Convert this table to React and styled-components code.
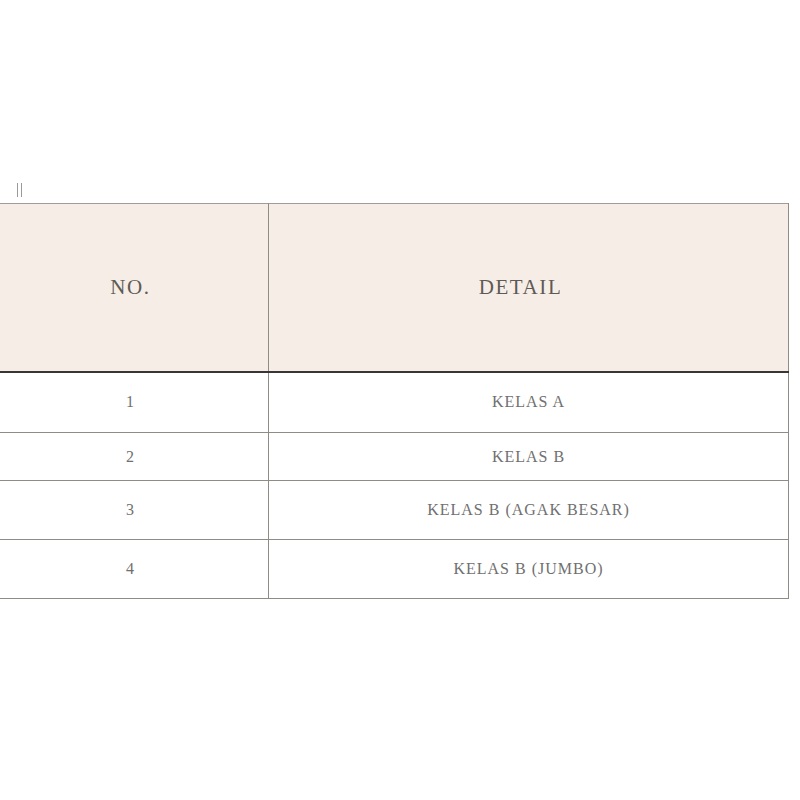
import React from "react";
import styled, { createGlobalStyle } from "styled-components";

const Global = createGlobalStyle`
  html, body { margin: 0; padding: 0; background: #fff; }
  body { font-family: "Liberation Serif", serif; }
`;

const Page = styled.div`
  width: 800px;
  height: 800px;
  overflow: hidden;
  padding-top: 181px;
  box-sizing: border-box;
`;

const Marker = styled.div`
  margin-left: 17px;
  height: 16px;
  display: flex;
  gap: 3px;
  margin-bottom: 6px;
  span {
    width: 1px;
    height: 14px;
    background: #9a9a9a;
    margin-top: 2px;
  }
`;

const Table = styled.table`
  margin-left: -8px;
  width: 796px;
  border-collapse: collapse;
  table-layout: fixed;
`;

const HeadCell = styled.th`
  box-sizing: border-box;
  height: 168px;
  background: #f6eee6;
  border-top: 1px solid #a09c98;
  border-bottom: 2px solid #3a3535;
  border-left: 1px solid #8f8b87;
  border-right: 1px solid #8f8b87;
  color: #5e5a57;
  font-family: "Liberation Serif", serif;
  font-weight: 400;
  font-size: 21px;
  letter-spacing: 1.6px;
  text-align: center;
  vertical-align: middle;
  padding: 0 ${(p) => p.$shift || 0}px 0 0;
  width: ${(p) => p.$w}px;
`;

const Cell = styled.td`
  box-sizing: border-box;
  height: ${(p) => p.$h}px;
  border: 1px solid #8f8b87;
  color: #707070;
  font-family: "Liberation Serif", serif;
  font-size: 16px;
  text-align: center;
  vertical-align: middle;
  padding: 0;
  letter-spacing: 1px;
`;

const rows = [
  { no: "1", detail: "KELAS A", h: 61 },
  { no: "2", detail: "KELAS B", h: 48 },
  { no: "3", detail: "KELAS B (AGAK BESAR)", h: 59 },
  { no: "4", detail: "KELAS B (JUMBO)", h: 59 },
];

export default function App() {
  return (
    <>
      <Global />
      <Page>
        <Marker>
          <span />
          <span />
        </Marker>
        <Table>
          <thead>
            <tr>
              <HeadCell $w={276}>NO.</HeadCell>
              <HeadCell $w={520} $shift={16}>DETAIL</HeadCell>
            </tr>
          </thead>
          <tbody>
            {rows.map((r) => (
              <tr key={r.no}>
                <Cell $h={r.h}>{r.no}</Cell>
                <Cell $h={r.h}>{r.detail}</Cell>
              </tr>
            ))}
          </tbody>
        </Table>
      </Page>
    </>
  );
}
